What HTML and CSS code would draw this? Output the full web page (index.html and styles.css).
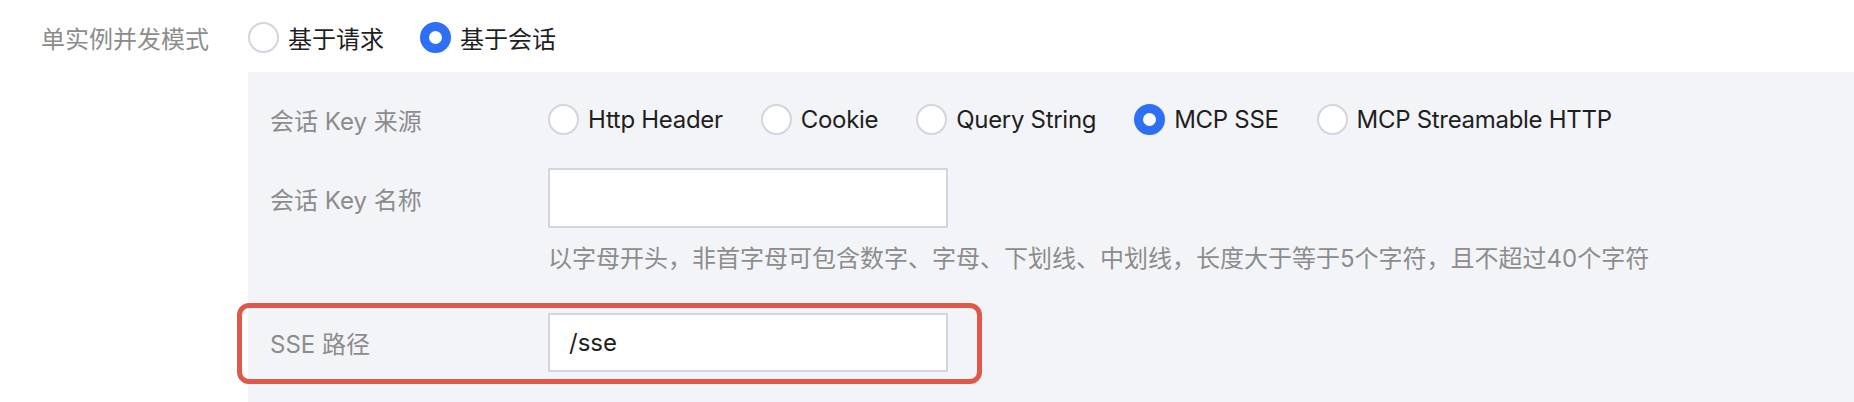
FILE: index.html
```html
<!DOCTYPE html>
<html lang="zh-CN">
<head>
<meta charset="utf-8">
<link rel="stylesheet" href="styles.css">
</head>
<body>
<div class="page">
  <div class="top-row">
    <div class="top-label">单实例并发模式</div>
    <div class="radio-group">
      <label class="radio"><span class="dot"></span><span class="rtext">基于请求</span></label>
      <label class="radio"><span class="dot checked"></span><span class="rtext">基于会话</span></label>
    </div>
  </div>
  <div class="panel">
    <div class="row row-radios">
      <div class="label">会话 Key 来源</div>
      <div class="radio-group">
        <label class="radio"><span class="dot"></span><span class="rtext">Http Header</span></label>
        <label class="radio"><span class="dot"></span><span class="rtext">Cookie</span></label>
        <label class="radio"><span class="dot"></span><span class="rtext">Query String</span></label>
        <label class="radio"><span class="dot checked"></span><span class="rtext">MCP SSE</span></label>
        <label class="radio"><span class="dot"></span><span class="rtext">MCP Streamable HTTP</span></label>
      </div>
    </div>
    <div class="row row-input">
      <div class="label">会话 Key 名称</div>
      <div class="input"></div>
    </div>
    <div class="hint">以字母开头，非首字母可包含数字、字母、下划线、中划线，长度大于等于5个字符，且不超过40个字符</div>
    <div class="row row-sse">
      <div class="label">SSE 路径</div>
      <div class="input"><span class="value">/sse</span></div>
      <div class="highlight"></div>
    </div>
  </div>
</div>
</body>
</html>
```

FILE: styles.css
```css
* { box-sizing: border-box; }
html, body { margin: 0; padding: 0; background: #ffffff; }
body {
  width: 1854px;
  height: 402px;
  overflow: hidden;
  font-family: "Inter", "Noto Sans CJK SC", sans-serif;
  font-size: 24px;
  color: #1f1f1f;
}
.page { display: flex; flex-direction: column; }
.top-row {
  display: flex;
  align-items: center;
  height: 72px;
  padding-top: 2px;
}
.top-label {
  width: 248px;
  padding-left: 41px;
  color: #8c8c8c;
  white-space: nowrap;
}
.radio-group { display: flex; align-items: center; gap: 38px; }
.top-row .radio-group { gap: 36px; }
.radio { display: flex; align-items: center; gap: 9px; white-space: nowrap; }
.row-radios .rtext { letter-spacing: -0.3px; }
.dot {
  width: 31px;
  height: 31px;
  border-radius: 50%;
  border: 2px solid #d2d5dd;
  background: #ffffff;
  flex: none;
}
.dot.checked {
  border: 9px solid #2f6ff6;
}
.panel {
  margin-left: 248px;
  background: #f3f4f8;
  height: 330px;
  padding: 28px 0 0 22px;
  display: flex;
  flex-direction: column;
  align-items: flex-start;
}
.row { display: flex; align-items: center; }
.row-radios { height: 38px; }
.label {
  width: 278px;
  color: #8c8c8c;
  white-space: nowrap;
  flex: none;
}
.row-input { margin-top: 30px; }
.input {
  width: 400px;
  height: 60px;
  background: #ffffff;
  border: 2px solid #d3d6de;
  display: flex;
  align-items: center;
  padding-left: 19px;
}
.value { color: #1f1f1f; }
.hint {
  margin-top: 14px;
  margin-left: 278px;
  line-height: 34px;
  color: #8c8c8c;
  white-space: nowrap;
}
.row-sse {
  position: relative;
  margin-top: 37px;
}
.row-sse .input { height: 59px; }
.highlight {
  position: absolute;
  left: -33px;
  right: -34px;
  top: -10px;
  bottom: -12px;
  border: 5px solid #e0584a;
  border-radius: 12px;
  pointer-events: none;
}
```
